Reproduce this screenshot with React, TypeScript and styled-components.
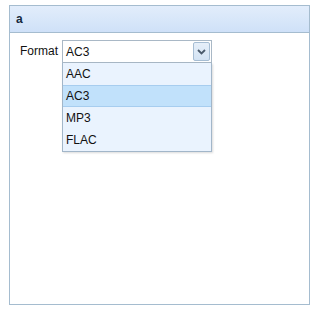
import styled, { createGlobalStyle } from "styled-components";

const Global = createGlobalStyle`
  body {
    margin: 0;
    background: #ffffff;
    font-family: "Liberation Sans", Arial, sans-serif;
  }
`;

const Page = styled.div`
  padding: 5px 0 0 9px;
`;

const Panel = styled.div`
  width: 299px;
  height: 298px;
  border: 1px solid #a5bccf;
  display: flex;
  flex-direction: column;
`;

const Header = styled.div`
  height: 27px;
  box-sizing: border-box;
  border-bottom: 1px solid #a5bccf;
  background: linear-gradient(#e2edfb, #cfe1f8);
  display: flex;
  align-items: center;
  padding-left: 6px;
  font-weight: bold;
  font-size: 12px;
  color: #15293d;
`;

const Body = styled.div`
  padding: 7px 0 0 10px;
`;

const FieldRow = styled.div`
  display: flex;
  align-items: flex-start;
  gap: 4px;
`;

const Label = styled.label`
  font-size: 12px;
  color: #111;
  line-height: 23px;
`;

const Combo = styled.div`
  position: relative;
  width: 150px;
`;

const Input = styled.div`
  height: 23px;
  box-sizing: border-box;
  border: 1px solid #a9b8c6;
  background: #fff;
  display: flex;
  align-items: center;
  justify-content: space-between;
  padding: 0 1px 0 3px;
  font-size: 12px;
  color: #111;
`;

const Trigger = styled.div`
  width: 17px;
  height: 19px;
  box-sizing: border-box;
  border: 1px solid #a6bdd3;
  border-radius: 2px;
  background: linear-gradient(#e6eff9, #d3e3f4);
  display: flex;
  align-items: center;
  justify-content: center;
`;

const List = styled.ul`
  position: absolute;
  top: 23px;
  left: 0;
  right: 0;
  margin: 0;
  padding: 0;
  list-style: none;
  background: #eaf3fe;
  border: 1px solid #a2b6c9;
  border-top: none;
  box-shadow: 1px 1px 2px rgba(0, 0, 0, 0.15);
`;

const Item = styled.li<{ $active?: boolean }>`
  height: 22px;
  box-sizing: border-box;
  line-height: 20px;
  padding-left: 3px;
  font-size: 12px;
  color: #111;
  background: ${(p) => (p.$active ? "#c1e1fb" : "transparent")};
  border-top: 1px solid ${(p) => (p.$active ? "#a7cdef" : "transparent")};
  border-bottom: 1px solid ${(p) => (p.$active ? "#a7cdef" : "transparent")};
`;

const options = ["AAC", "AC3", "MP3", "FLAC"];

export default function App() {
  const value = "AC3";
  return (
    <>
      <Global />
      <Page>
        <Panel>
          <Header>a</Header>
          <Body>
            <FieldRow>
              <Label>Format</Label>
              <Combo>
                <Input>
                  <span>{value}</span>
                  <Trigger>
                    <svg width="9" height="6" viewBox="0 0 9 6">
                      <path d="M1 1 L4.5 4.5 L8 1" fill="none" stroke="#4a5a6c" strokeWidth="1.8" />
                    </svg>
                  </Trigger>
                </Input>
                <List>
                  {options.map((o) => (
                    <Item key={o} $active={o === value}>
                      {o}
                    </Item>
                  ))}
                </List>
              </Combo>
            </FieldRow>
          </Body>
        </Panel>
      </Page>
    </>
  );
}
